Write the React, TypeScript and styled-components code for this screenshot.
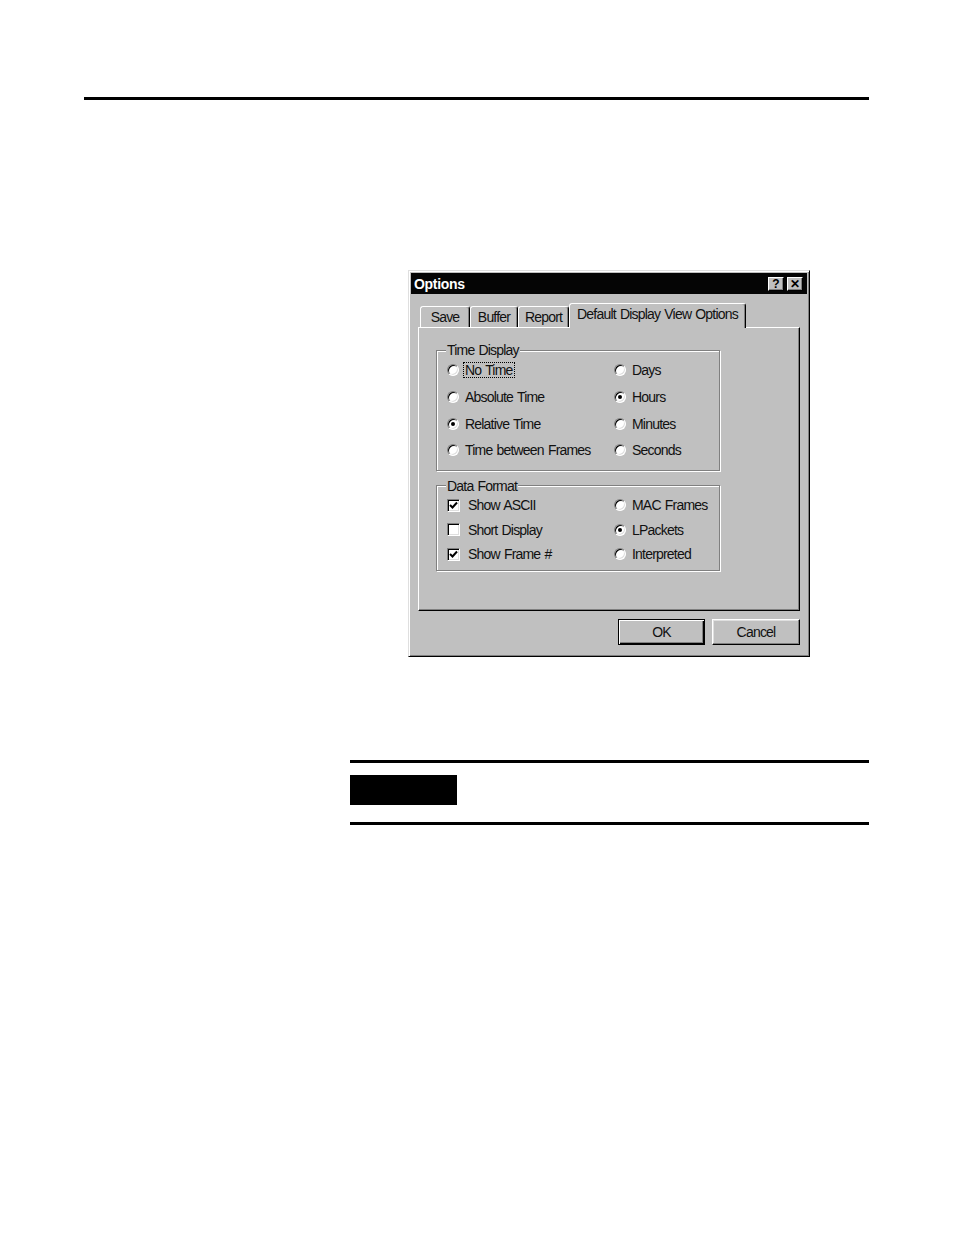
import styled, { createGlobalStyle } from "styled-components";

const GlobalStyle = createGlobalStyle`
  body {
    margin: 0;
    background: #fff;
    font-family: "Liberation Sans", Arial, sans-serif;
  }
`;

const Page = styled.div`
  width: 954px;
  min-height: 1235px;
  padding-top: 97px;
  box-sizing: border-box;
`;

const HeaderRule = styled.div`
  margin-left: 84px;
  width: 785px;
  height: 3px;
  background: #000;
`;

const Dialog = styled.div`
  margin: 170px 0 0 408px;
  width: 402px;
  height: 387px;
  box-sizing: border-box;
  background: #c0c0c0;
  border: 1px solid;
  border-color: #dfdfdf #000 #000 #dfdfdf;
  box-shadow: inset 1px 1px #fff, inset -1px -1px #808080;
  padding: 2px;
  display: flex;
  flex-direction: column;
  font-size: 14px;
  letter-spacing: -0.8px;
  word-spacing: 1px;
  color: #111;
`;

const TitleBar = styled.div`
  height: 21px;
  background: #050505;
  display: flex;
  align-items: center;
  justify-content: space-between;
  padding: 0 4px 0 3px;
`;

const Title = styled.span`
  color: #fff;
  font-weight: 700;
  font-size: 14px;
  letter-spacing: -0.3px;
`;

const TitleButtons = styled.div`
  display: flex;
  gap: 3px;
`;

const TitleButton = styled.div`
  width: 16px;
  height: 14px;
  box-sizing: border-box;
  background: #c0c0c0;
  border: 1px solid;
  border-color: #fff #000 #000 #fff;
  box-shadow: inset -1px -1px #808080;
  display: flex;
  align-items: center;
  justify-content: center;
  font-weight: 700;
  font-size: 12px;
  line-height: 1;
  letter-spacing: 0;
  color: #000;
`;

const Body = styled.div`
  flex: 1;
  display: flex;
  flex-direction: column;
  padding: 9px 7px 0 7px;
`;

const TabStrip = styled.div`
  display: flex;
  align-items: flex-end;
  height: 24px;
  padding-left: 2px;
`;

const Tab = styled.div<{ $active?: boolean; $w: number }>`
  position: relative;
  z-index: ${(p) => (p.$active ? 1 : 0)};
  width: ${(p) => p.$w}px;
  height: ${(p) => (p.$active ? 25 : 21)}px;
  margin-bottom: ${(p) => (p.$active ? -1 : 0)}px;
  box-sizing: border-box;
  background: #c0c0c0;
  border: 1px solid;
  border-bottom: none;
  border-color: #fff #000 transparent #fff;
  border-radius: 3px 3px 0 0;
  box-shadow: inset -1px 0 #808080;
  display: flex;
  justify-content: center;
  padding-top: 2px;
  line-height: 16px;
`;

const Panel = styled.div`
  height: 284px;
  box-sizing: border-box;
  border: 1px solid;
  border-color: #fff #000 #000 #fff;
  box-shadow: inset -1px -1px #808080;
  padding: 14px 0 0 17px;
  display: flex;
  flex-direction: column;
`;

const Group = styled.fieldset<{ $gap?: number }>`
  margin: ${(p) => p.$gap ?? 0}px 0 0 0;
  width: 284px;
  box-sizing: border-box;
  border: 1px solid #808080;
  box-shadow: inset 1px 1px #fff, 1px 1px #fff;
  padding: 0 0 0 10px;
  min-inline-size: 0;
`;

const Legend = styled.legend`
  padding: 0 1px;
  margin-left: -1px;
  line-height: 16px;
  background: #c0c0c0;
`;

const Options = styled.div<{ $rows: number; $rowH: number; $pad: number }>`
  display: grid;
  grid-template-columns: 167px 1fr;
  grid-template-rows: repeat(${(p) => p.$rows}, ${(p) => p.$rowH}px);
  grid-auto-flow: column;
  margin-top: -1px;
  padding-bottom: ${(p) => p.$pad}px;
`;

const Item = styled.label<{ $gap?: number }>`
  display: flex;
  align-items: center;
  gap: ${(p) => p.$gap ?? 6}px;
  white-space: nowrap;
`;

const Radio = styled.span<{ $on?: boolean }>`
  position: relative;
  width: 12px;
  height: 12px;
  box-sizing: border-box;
  border-radius: 50%;
  border: 1px solid;
  border-color: #808080 #fff #fff #808080;
  box-shadow: inset 1px 1px #000, inset -1px -1px #dfdfdf;
  background: #fff;
  flex: none;

  &::after {
    content: "";
    display: ${(p) => (p.$on ? "block" : "none")};
    position: absolute;
    left: 3px;
    top: 3px;
    width: 4px;
    height: 4px;
    border-radius: 50%;
    background: #000;
  }
`;

const Check = styled.span`
  width: 13px;
  height: 13px;
  box-sizing: border-box;
  border: 1px solid;
  border-color: #808080 #fff #fff #808080;
  box-shadow: inset 1px 1px #000, inset -1px -1px #dfdfdf;
  background: #fff;
  flex: none;
  display: flex;
  align-items: center;
  justify-content: center;
`;

const Focus = styled.span`
  outline: 1px dotted #000;
  outline-offset: 0;
  padding: 0 1px;
  margin-left: -1px;
  line-height: 14px;
`;

const ButtonRow = styled.div`
  display: flex;
  justify-content: flex-end;
  gap: 7px;
  margin-top: 8px;
`;

const Button = styled.div<{ $default?: boolean; $w: number }>`
  width: ${(p) => p.$w}px;
  height: 26px;
  box-sizing: border-box;
  background: #c0c0c0;
  border: 1px solid;
  border-color: ${(p) => (p.$default ? "#000" : "#fff #000 #000 #fff")};
  box-shadow: ${(p) =>
    p.$default
      ? "inset 1px 1px #fff, inset -1px -1px #000, inset -2px -2px #808080"
      : "inset -1px -1px #808080, inset 1px 1px #dfdfdf"};
  display: flex;
  align-items: center;
  justify-content: center;
`;

const Note = styled.div`
  margin: 103px 0 0 350px;
  width: 519px;
  display: flex;
  flex-direction: column;
`;

const NoteRule = styled.div<{ $gap?: number }>`
  height: 3px;
  background: #000;
  margin-top: ${(p) => p.$gap ?? 0}px;
`;

const NoteLabel = styled.div`
  margin-top: 12px;
  width: 107px;
  height: 30px;
  background: #000;
`;

const CheckMark = () => (
  <svg width="9" height="9" viewBox="0 0 9 9">
    <path d="M1 4 L3.5 6.5 L8 1.5" fill="none" stroke="#000" strokeWidth="2" />
  </svg>
);

const timeLeft = ["No Time", "Absolute Time", "Relative Time", "Time between Frames"];
const timeRight = ["Days", "Hours", "Minutes", "Seconds"];

export default function App() {
  return (
    <>
      <GlobalStyle />
      <Page>
        <HeaderRule />
        <Dialog>
          <TitleBar>
            <Title>Options</Title>
            <TitleButtons>
              <TitleButton>?</TitleButton>
              <TitleButton>✕</TitleButton>
            </TitleButtons>
          </TitleBar>
          <Body>
            <TabStrip>
              <Tab $w={50}>Save</Tab>
              <Tab $w={48}>Buffer</Tab>
              <Tab $w={51}>Report</Tab>
              <Tab $w={177} $active>
                Default Display View Options
              </Tab>
            </TabStrip>
            <Panel>
              <Group>
                <Legend>Time Display</Legend>
                <Options $rows={4} $rowH={26.7} $pad={6}>
                  {timeLeft.map((t) => (
                    <Item key={t}>
                      <Radio $on={t === "Relative Time"} />
                      {t === "No Time" ? <Focus>{t}</Focus> : t}
                    </Item>
                  ))}
                  {timeRight.map((t) => (
                    <Item key={t}>
                      <Radio $on={t === "Hours"} />
                      {t}
                    </Item>
                  ))}
                </Options>
              </Group>
              <Group $gap={7}>
                <Legend>Data Format</Legend>
                <Options $rows={3} $rowH={24.5} $pad={4}>
                  <Item $gap={8}>
                    <Check>
                      <CheckMark />
                    </Check>
                    Show ASCII
                  </Item>
                  <Item $gap={8}>
                    <Check />
                    Short Display
                  </Item>
                  <Item $gap={8}>
                    <Check>
                      <CheckMark />
                    </Check>
                    Show Frame #
                  </Item>
                  <Item>
                    <Radio />
                    MAC Frames
                  </Item>
                  <Item>
                    <Radio $on />
                    LPackets
                  </Item>
                  <Item>
                    <Radio />
                    Interpreted
                  </Item>
                </Options>
              </Group>
            </Panel>
            <ButtonRow>
              <Button $w={87} $default>
                OK
              </Button>
              <Button $w={88}>Cancel</Button>
            </ButtonRow>
          </Body>
        </Dialog>
        <Note>
          <NoteRule />
          <NoteLabel />
          <NoteRule $gap={17} />
        </Note>
      </Page>
    </>
  );
}
